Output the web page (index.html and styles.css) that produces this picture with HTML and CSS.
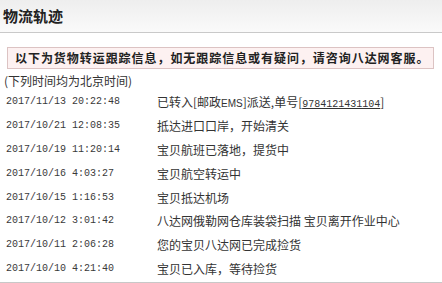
FILE: index.html
```html
<!DOCTYPE html>
<html>
<head>
<meta charset="utf-8">
<link rel="stylesheet" href="styles.css">
</head>
<body>
<div class="panel">
  <div class="head">物流轨迹</div>
  <div class="notice">以下为货物转运跟踪信息，如无跟踪信息或有疑问，请咨询八达网客服。</div>
  <div class="tz">(下列时间均为北京时间)</div>
  <div class="rows">
    <div class="row"><span class="t">2017/11/13 20:22:48</span><span class="d">已转入[邮政<span class="ems">EMS</span>]派送,单号[<u>9784121431104</u>]</span></div>
    <div class="row"><span class="t">2017/10/21 12:08:35</span><span class="d">抵达进口口岸，开始清关</span></div>
    <div class="row"><span class="t">2017/10/19 11:20:14</span><span class="d">宝贝航班已落地，提货中</span></div>
    <div class="row"><span class="t">2017/10/16 4:03:27</span><span class="d">宝贝航空转运中</span></div>
    <div class="row"><span class="t">2017/10/15 1:16:53</span><span class="d">宝贝抵达机场</span></div>
    <div class="row"><span class="t">2017/10/12 3:01:42</span><span class="d">八达网俄勒网仓库装袋扫描 宝贝离开作业中心</span></div>
    <div class="row"><span class="t">2017/10/11 2:06:28</span><span class="d">您的宝贝八达网已完成捡货</span></div>
    <div class="row"><span class="t">2017/10/10 4:21:40</span><span class="d">宝贝已入库，等待捡货</span></div>
  </div>
</div>
</body>
</html>
```
FILE: styles.css
```css
html, body { margin: 0; padding: 0; background: #fff; }
body { width: 442px; height: 283px; overflow: hidden; font-family: "Noto Sans CJK SC", "Noto Sans", sans-serif; color: #333; }
.panel { display: flex; flex-direction: column; height: 282px; border-bottom: 1px solid #c8c8c8; }
.head {
  height: 32px; line-height: 32px; padding-left: 3px;
  font-size: 15px; font-weight: bold; color: #222;
  background: linear-gradient(#eeeeee, #fafafa);
  border-bottom: 1px solid #c9c9c9;
}
.notice {
  margin: 14px 8px 0 7px; height: 20px; line-height: 20px;
  padding-left: 7px;
  background: #fdf1f1; border: 1px solid #dcc3c3;
  font-size: 12px; font-weight: bold; color: #222; letter-spacing: 0.95px;
  white-space: nowrap;
}
.tz { margin-top: 3px; padding-left: 4px; font-size: 12px; line-height: 17px; color: #333; }
.rows { display: flex; flex-direction: column; padding-top: 1px; }
.row { height: 23.8px; display: flex; align-items: center; font-size: 12px; color: #333; }
.t { width: 151px; padding-left: 6px; font-family: "Liberation Mono", monospace; font-size: 10px; color: #3a3a3a; }
.d { white-space: nowrap; }
.ems { font-family: "Liberation Sans", sans-serif; font-size: 10px; }
u { font-family: "Liberation Mono", monospace; font-size: 10px; }
```
